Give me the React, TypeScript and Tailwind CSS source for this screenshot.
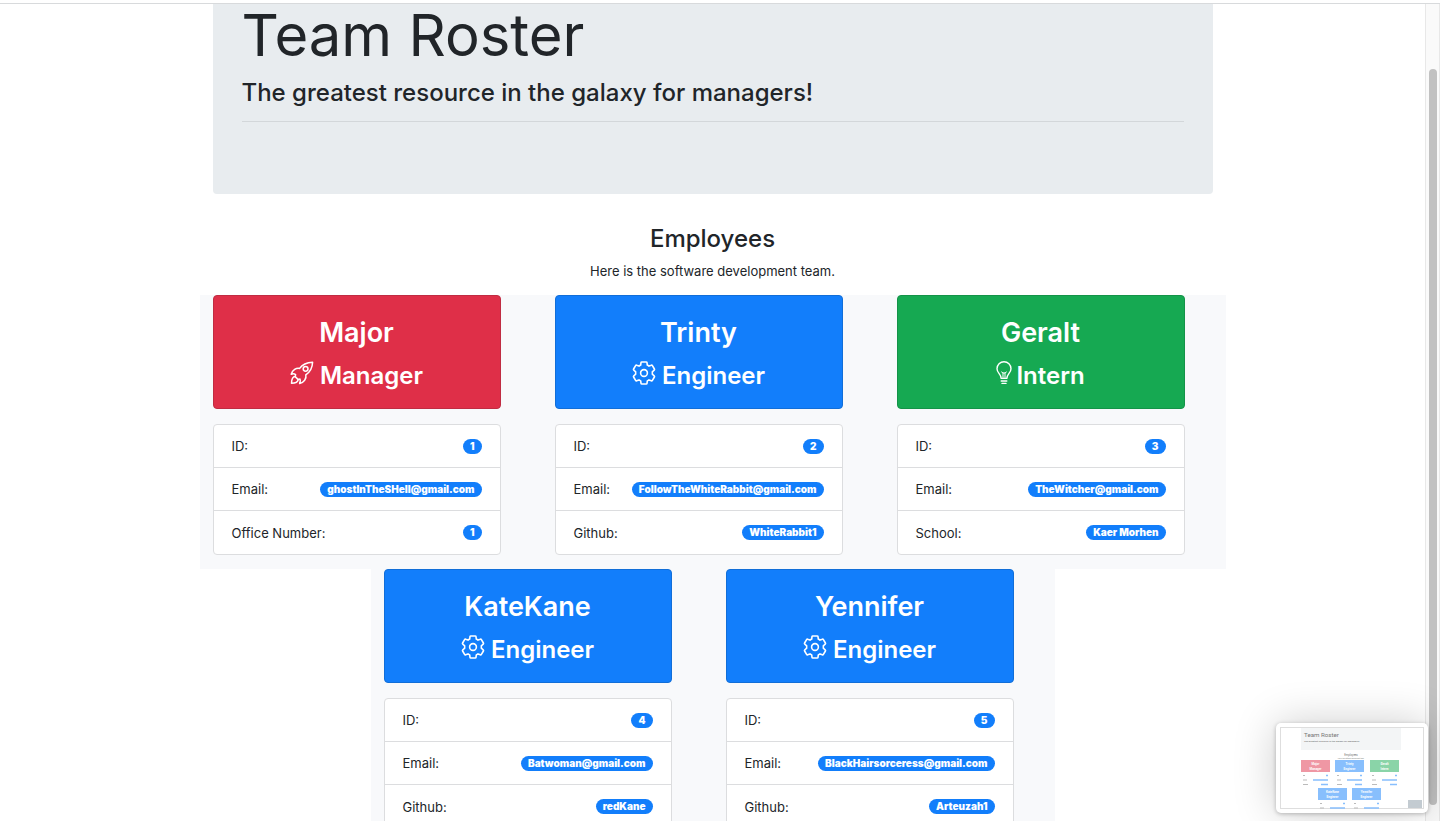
import type { ReactNode } from "react";

type Role = "Manager" | "Engineer" | "Intern";

interface Employee {
  name: string;
  role: Role;
  details: [string, string][];
}

const employees: Employee[] = [
  {
    name: "Major",
    role: "Manager",
    details: [["ID:", "1"], ["Email:", "ghostInTheSHell@gmail.com"], ["Office Number:", "1"]],
  },
  {
    name: "Trinty",
    role: "Engineer",
    details: [["ID:", "2"], ["Email:", "FollowTheWhiteRabbit@gmail.com"], ["Github:", "WhiteRabbit1"]],
  },
  {
    name: "Geralt",
    role: "Intern",
    details: [["ID:", "3"], ["Email:", "TheWitcher@gmail.com"], ["School:", "Kaer Morhen"]],
  },
  {
    name: "KateKane",
    role: "Engineer",
    details: [["ID:", "4"], ["Email:", "Batwoman@gmail.com"], ["Github:", "redKane"]],
  },
  {
    name: "Yennifer",
    role: "Engineer",
    details: [["ID:", "5"], ["Email:", "BlackHairsorceress@gmail.com"], ["Github:", "Arteuzah1"]],
  },
];

const headerColors: Record<Role, string> = {
  Manager: "bg-[#df2f48] border-[#c02c42]",
  Engineer: "bg-[#127efb] border-[#116ed8]",
  Intern: "bg-[#16a952] border-[#149348]",
};

function Rocket() {
  return (
    <svg aria-hidden="true" viewBox="0 0 24 24" className="mr-[6px] h-6 w-6 shrink-0" fill="none" stroke="currentColor" strokeWidth="1.5" strokeLinejoin="round" strokeLinecap="round">
      <path d="M22.6 1.2C17.4 1.4 12.6 3 9.6 7.4C6.2 6.6 2.6 9 1.2 13.2C2.8 12.6 4.6 12.8 5.6 13.6L5.2 15.6L8.2 18.6L10 18C10.6 19.4 10.4 21 9.6 22.6C13.8 21.4 16.8 17.8 15.8 13.8C20.4 10.8 22.4 6.4 22.6 1.2Z" />
      <circle cx="15.6" cy="7.8" r="2.4" />
      <path d="M5.2 15.6C2.4 15.8 1.6 18.6 1.5 22.3C5 22.2 7.8 21.4 8.2 18.6" />
    </svg>
  );
}

function Gear() {
  return (
    <svg aria-hidden="true" viewBox="0 0 24 24" className="mr-[6px] h-6 w-6 shrink-0" fill="none" stroke="currentColor" strokeWidth="1.6" strokeLinejoin="round">
      <path d="M9.8 1H14.2Q14.9 1 15 1.7L15.3 4.1Q16.2 4.5 17 5.1L19.3 4.2Q20 3.9 20.4 4.6L22.4 8Q22.8 8.7 22.2 9.2L20.3 10.8Q20.5 12 20.3 13.2L22.2 14.8Q22.8 15.3 22.4 16L20.4 19.4Q20 20.1 19.3 19.8L17 18.9Q16.2 19.5 15.3 19.9L15 22.3Q14.9 23 14.2 23H9.8Q9.1 23 9 22.3L8.7 19.9Q7.8 19.5 7 18.9L4.7 19.8Q4 20.1 3.6 19.4L1.6 16Q1.2 15.3 1.8 14.8L3.7 13.2Q3.5 12 3.7 10.8L1.8 9.2Q1.2 8.7 1.6 8L3.6 4.6Q4 3.9 4.7 4.2L7 5.1Q7.8 4.5 8.7 4.1L9 1.7Q9.1 1 9.8 1Z" />
      <circle cx="12" cy="12" r="3.4" />
    </svg>
  );
}

function Bulb() {
  return (
    <svg aria-hidden="true" viewBox="0 0 16 24" className="mr-1 h-6 w-4 shrink-0" fill="none" stroke="currentColor" strokeWidth="1.4" strokeLinejoin="round" strokeLinecap="round">
      <path d="M5.2 17.4C5.2 13.2 1 12.1 1 7.7A7 7 0 0 1 15 7.7C15 12.1 10.8 13.2 10.8 17.4Z" />
      <path d="M5.6 11L7 12H9L10.4 11M7 12V17M9 12V17" strokeWidth="1" />
      <path d="M5.2 20H10.8M6 22.4H10" />
    </svg>
  );
}

const roleIcons: Record<Role, ReactNode> = {
  Manager: <Rocket />,
  Engineer: <Gear />,
  Intern: <Bulb />,
};

function EmployeeCard({ employee }: { employee: Employee }) {
  return (
    <article className="w-full max-w-[342px] bg-[#f8f9fb] px-[13px] pb-[14px]">
      <div className="w-[288px]">
        <header className={`rounded-[4px] border pt-5 pb-[17px] text-center text-white ${headerColors[employee.role]}`}>
          <h3 className="text-[27px] leading-[34px] font-semibold">{employee.name}</h3>
          <h4 className="mt-[11px] flex justify-center text-[24px] leading-[30px] font-semibold">
            {roleIcons[employee.role]}
            {employee.role}
          </h4>
        </header>
        <dl className="mt-[15px] rounded-[4px] border border-[#dcdddf] bg-white">
          {employee.details.map(([label, value]) => (
            <div key={label} className="flex h-[43px] items-center justify-between border-b border-[#dcdddf] px-[18px] last:border-b-0">
              <dt className="text-[13px] leading-[22px]">{label}</dt>
              <dd className="rounded-full bg-[#127efb] px-[7px] text-[10px] leading-[15px] font-black text-white">{value}</dd>
            </div>
          ))}
        </dl>
      </div>
    </article>
  );
}

const miniCards = [
  { x: 21, y: 33, fill: "#ef97a4", name: "Major", role: "Manager" },
  { x: 55, y: 33, fill: "#88bffd", name: "Trinty", role: "Engineer" },
  { x: 90, y: 33, fill: "#8ad4a8", name: "Geralt", role: "Intern" },
  { x: 38, y: 61, fill: "#88bffd", name: "KateKane", role: "Engineer" },
  { x: 72, y: 61, fill: "#88bffd", name: "Yennifer", role: "Engineer" },
];

function PreviewThumbnail() {
  return (
    <aside className="absolute right-3 bottom-2 rounded-[5px] bg-white p-1 shadow-[0_0_44px_rgba(0,0,0,0.2),0_1px_4px_rgba(0,0,0,0.25)]">
      <svg role="img" aria-label="Page preview" viewBox="0 0 144 82" className="h-[82px] w-[144px]" fontFamily="Roboto, sans-serif" fill="#777">
        <rect x="0.5" y="0.5" width="143" height="81" fill="#fff" stroke="#dedede" />
        <rect x="21" y="1" width="100" height="22" fill="#f3f5f6" />
        <text x="24" y="10" fontSize="6.2">Team Roster</text>
        <text x="24" y="14.5" fontSize="2.5" fontWeight="500">The greatest resource in the galaxy for managers!</text>
        <text x="71" y="29" fontSize="2.8" textAnchor="middle">Employees</text>
        <text x="71" y="32" fontSize="1.5" textAnchor="middle">Here is the software development team.</text>
        {miniCards.map((card) => (
          <g key={card.name}>
            <rect x={card.x} y={card.y} width="29" height="12" fill={card.fill} />
            <text x={card.x + 14.5} y={card.y + 5} fontSize="3" fontWeight="700" fill="#fff" textAnchor="middle">{card.name}</text>
            <text x={card.x + 14.5} y={card.y + 9.5} fontSize="3" fontWeight="700" fill="#fff" textAnchor="middle">{card.role}</text>
            <path d={`M${card.x + 2} ${card.y + 15.5}h2M${card.x + 2} ${card.y + 20}h4`} stroke="#bbb" />
            <path d={`M${card.x + 25} ${card.y + 15.5}h2M${card.x + 12} ${card.y + 20}h15`} stroke="#88bffd" strokeWidth="1.5" />
            {card.y < 50 && (
              <>
                <path d={`M${card.x + 2} ${card.y + 24.5}h5`} stroke="#bbb" />
                <path d={`M${card.x + 20} ${card.y + 24.5}h7`} stroke="#88bffd" strokeWidth="1.5" />
              </>
            )}
          </g>
        ))}
        <rect x="128" y="73" width="14" height="8" fill="#c3cbd1" />
      </svg>
    </aside>
  );
}

export default function App() {
  return (
    <div className="relative flex h-screen flex-col overflow-hidden bg-white pt-[3px] font-['Inter',sans-serif] text-[#212529]">
      <div className="flex min-h-0 flex-1 border-t border-[#d8dadc]">
        <main className="min-w-0 flex-1">
          <div className="mx-auto max-w-[1026px]">
            <header className="mx-[13px] rounded-b-[4px] bg-[#e8ecef] px-[29px] pb-[72px]">
              <h1 className="text-[58px] leading-[62px] font-normal">Team Roster</h1>
              <p className="mt-3 text-[24px] leading-[30px] font-medium">The greatest resource in the galaxy for managers!</p>
              <hr className="mt-[13px] border-[#d3d7da]" />
            </header>
            <section className="mt-[30px]">
              <h2 className="text-center text-[24px] leading-[30px] font-medium">Employees</h2>
              <p className="mt-[6px] text-center text-[13px] leading-[22px]">Here is the software development team.</p>
              <div className="mt-[13px] flex flex-wrap justify-center">
                {employees.map((employee) => (
                  <EmployeeCard key={employee.name} employee={employee} />
                ))}
              </div>
            </section>
          </div>
        </main>
        <div aria-hidden="true" className="flex w-[15px] justify-center border-x border-[#e8e8e8] bg-[#fafafa] pt-[65px] pb-4">
          <div className="w-2 rounded-full bg-[#c1c1c1]" />
        </div>
      </div>
      <PreviewThumbnail />
    </div>
  );
}
